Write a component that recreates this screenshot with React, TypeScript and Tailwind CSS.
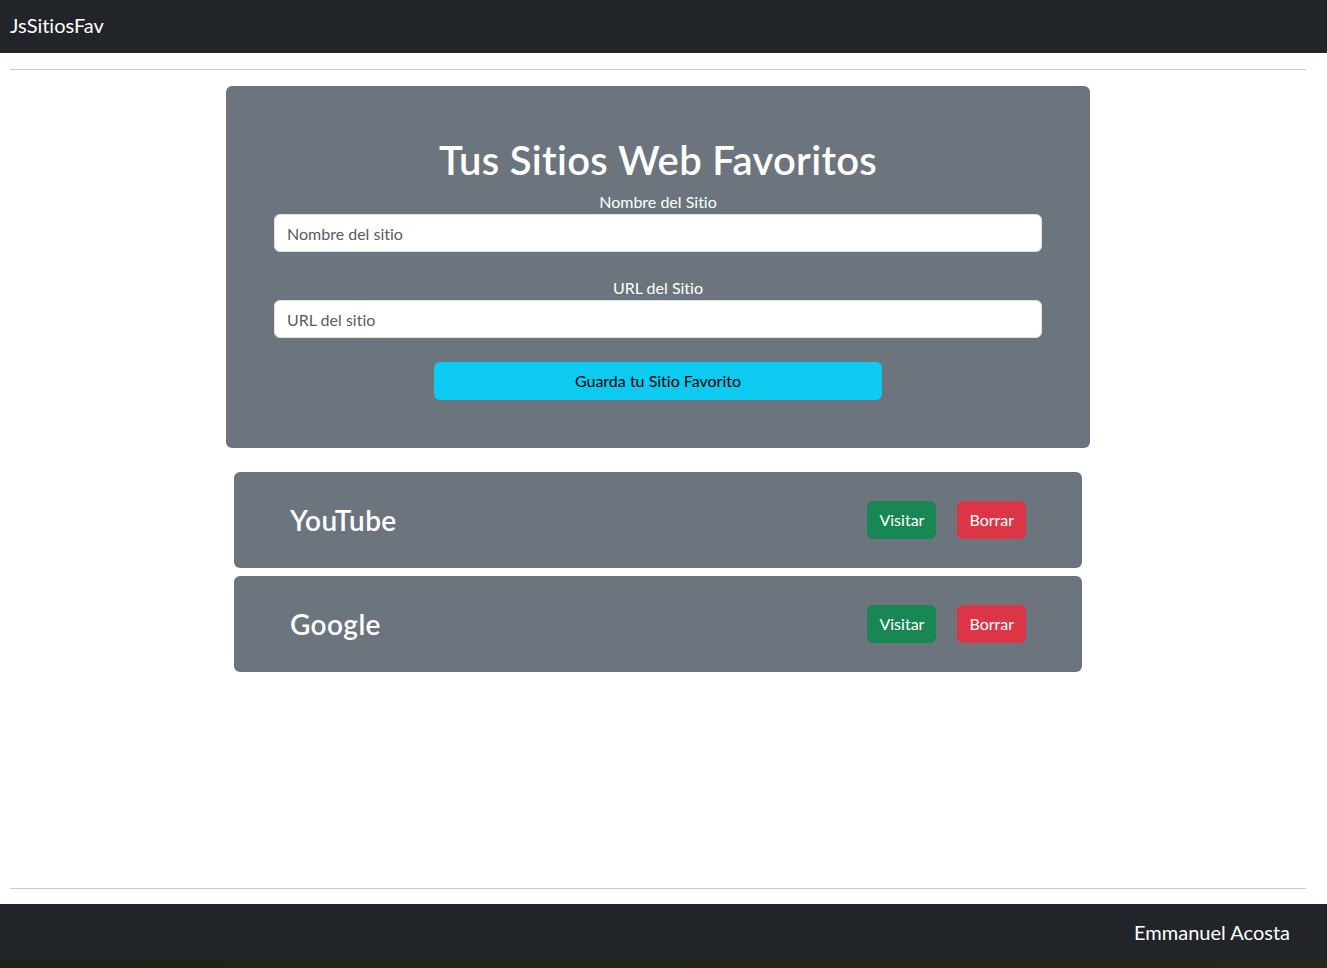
import { useState } from 'react';

interface Site {
  id: number;
  name: string;
  url: string;
}

const initialSites: Site[] = [
  { id: 1, name: 'YouTube', url: 'https://youtube.com' },
  { id: 2, name: 'Google', url: 'https://google.com' },
];

function SiteCard({ site, onDelete }: { site: Site; onDelete: (id: number) => void }) {
  return (
    <div className="mx-2 h-[96px] rounded-md bg-[#6c757d] px-[56px] flex items-center justify-between">
      <h3 className="text-[28px] font-semibold text-white leading-[1.2] tracking-[0.4px] mt-[2px]">{site.name}</h3>
      <div className="flex items-center gap-[21px]">
        <a
          href={site.url}
          target="_blank"
          className="h-[38px] px-3 rounded-md bg-[#198754] text-white text-[16px] flex items-center"
        >
          Visitar
        </a>
        <button
          onClick={() => onDelete(site.id)}
          className="h-[38px] px-3 rounded-md bg-[#dc3545] text-white text-[16px] flex items-center"
        >
          Borrar
        </button>
      </div>
    </div>
  );
}

export default function App() {
  const [sites, setSites] = useState<Site[]>(initialSites);
  const [name, setName] = useState('');
  const [url, setUrl] = useState('');

  const handleSave = () => {
    if (!name || !url) return;
    setSites([...sites, { id: Date.now(), name, url }]);
    setName('');
    setUrl('');
  };

  const handleDelete = (id: number) => {
    setSites(sites.filter((s) => s.id !== id));
  };

  return (
    <div className="min-h-screen bg-white flex flex-col font-['Lato',sans-serif] [font-variant-ligatures:none] text-[#212529]">
      {/* Navbar */}
      <nav className="h-[53px] bg-[#212529] flex items-center px-[10px] pb-[3px]">
        <span className="text-[20px] text-white">JsSitiosFav</span>
      </nav>

      <div className="w-[1316px] flex-1 flex flex-col">
        <hr className="mt-4 mx-[10px] border-t border-[#c8c9ca]" />

        <main className="flex-1 w-[864px] mx-auto pt-4">
          {/* Form */}
          <div className="rounded-md bg-[#6c757d] p-12 flex flex-col items-center">
            <h1 className="text-[40px] font-semibold text-white leading-[1.2] tracking-[0.3px] mt-[2px] mb-[6px]">
              Tus Sitios Web Favoritos
            </h1>
            <label className="text-white text-[16px] leading-6">Nombre del Sitio</label>
            <input
              value={name}
              onChange={(e) => setName(e.target.value)}
              placeholder="Nombre del sitio"
              className="w-full h-[38px] rounded-md border border-[#dee2e6] bg-white px-3 text-[16px] placeholder:text-[#595c5f] outline-none"
            />
            <label className="mt-6 text-white text-[16px] leading-6">URL del Sitio</label>
            <input
              value={url}
              onChange={(e) => setUrl(e.target.value)}
              placeholder="URL del sitio"
              className="w-full h-[38px] rounded-md border border-[#dee2e6] bg-white px-3 text-[16px] placeholder:text-[#595c5f] outline-none"
            />
            <button
              onClick={handleSave}
              className="mt-6 w-[448px] h-[38px] rounded-md bg-[#0dcaf0] text-black text-[16px]"
            >
              Guarda tu Sitio Favorito
            </button>
          </div>

          {/* List */}
          <div className="mt-6 flex flex-col gap-2">
            {sites.map((site) => (
              <SiteCard key={site.id} site={site} onDelete={handleDelete} />
            ))}
          </div>
        </main>

        <hr className="mb-[15px] mx-[10px] border-t border-[#c8c9ca]" />
      </div>

      {/* Footer */}
      <footer className="h-[56px] bg-[#212529] flex items-center justify-end pr-[37px]">
        <span className="text-[20px] text-white">Emmanuel Acosta</span>
      </footer>
      <div className="h-[8px] bg-gradient-to-r from-[#1d2119] to-[#27281a]" />
    </div>
  );
}
